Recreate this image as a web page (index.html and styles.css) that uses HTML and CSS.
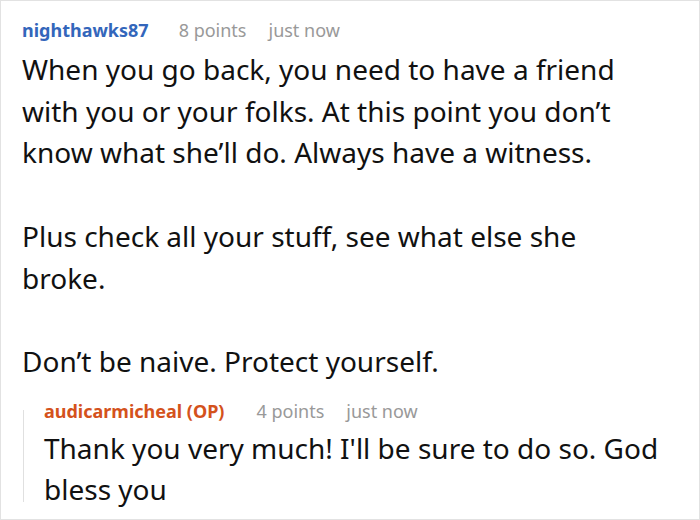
FILE: index.html
```html
<!DOCTYPE html>
<html>
<head>
<meta charset="utf-8">
<link rel="stylesheet" href="styles.css">
</head>
<body>
<div class="frame">
  <div class="comment">
    <div class="meta">
      <span class="author">nighthawks87</span>
      <span class="info">8 points</span>
      <span class="info">just now</span>
    </div>
    <div class="body">
      <p>When you go back, you need to have a friend with you or your folks. At this point you don’t know what she’ll do. Always have a witness.</p>
      <p>Plus check all your stuff, see what else she broke.</p>
      <p>Don’t be naive. Protect yourself.</p>
    </div>
    <div class="reply">
      <div class="meta">
        <span class="author op">audicarmicheal (OP)</span>
        <span class="info">4 points</span>
        <span class="info">just now</span>
      </div>
      <div class="body">
        <p>Thank you very much! I'll be sure to do so. God bless you</p>
      </div>
    </div>
  </div>
</div>
</body>
</html>
```

FILE: styles.css
```css
html, body {
  margin: 0;
  padding: 0;
  background: #fff;
}
.frame {
  box-sizing: border-box;
  width: 700px;
  height: 520px;
  border: 1px solid #e2e2e2;
  overflow: hidden;
  font-family: "Noto Sans", "Open Sans", sans-serif;
  color: #111;
}
.comment {
  padding: 17px 38px 0 21px;
}
.meta {
  display: flex;
  gap: 30px;
  font-size: 18px;
  line-height: 24px;
}
.author {
  font-weight: bold;
  color: #3366bb;
}
.author.op {
  color: #d4521c;
}
.reply .meta {
  gap: 32px;
}
.info {
  color: #999;
}
.meta .info + .info {
  margin-left: -8px;
}
.reply .meta .info + .info {
  margin-left: -10px;
}
.body {
  font-size: 28px;
  line-height: 41.7px;
}
.body p {
  margin: 0 0 41.7px 0;
}
.body p:last-child {
  margin-bottom: 0;
}
.comment > .body {
  margin-top: 7px;
}
.reply {
  position: relative;
  margin-top: 16px;
  padding-left: 22px;
}
.reply::before {
  content: "";
  position: absolute;
  left: 1px;
  top: 11px;
  bottom: 8px;
  width: 1px;
  background: #e0e0e0;
}
.reply .body {
  margin-top: 5px;
  line-height: 41px;
}
```
